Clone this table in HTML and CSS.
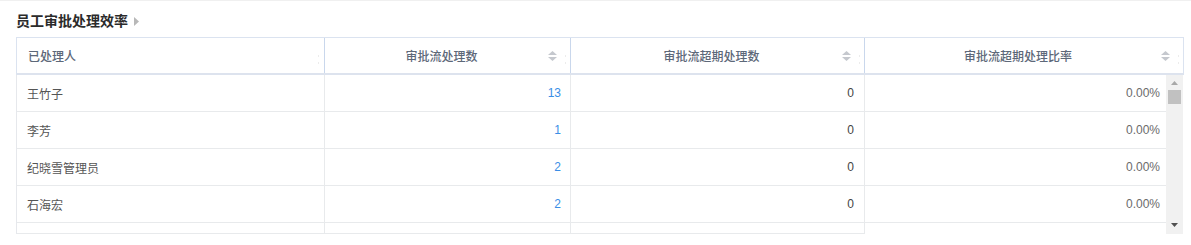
FILE: index.html
```html
<!DOCTYPE html>
<html lang="zh-CN">
<head>
<meta charset="utf-8">
<title>员工审批处理效率</title>
<link rel="stylesheet" href="styles.css">
</head>
<body>
<div class="page">
  <div class="title">
    <span class="title-text">员工审批处理效率</span>
    <svg class="title-arrow" width="5" height="9" viewBox="0 0 5 9"><polygon points="0,0 5,4.5 0,9" fill="#b8b8b8"/></svg>
  </div>
  <div class="table">
    <div class="thead">
      <div class="th th1"><span class="th-text">已处理人</span><span class="dots"></span></div>
      <div class="th"><span class="th-text">审批流处理数</span><svg class="sort" width="9" height="10" viewBox="0 0 9 10"><polygon points="0,4 4.5,0 9,4" fill="#c5c8ce"/><polygon points="0,6 4.5,10 9,6" fill="#c5c8ce"/></svg><span class="dots"></span></div>
      <div class="th"><span class="th-text">审批流超期处理数</span><svg class="sort" width="9" height="10" viewBox="0 0 9 10"><polygon points="0,4 4.5,0 9,4" fill="#c5c8ce"/><polygon points="0,6 4.5,10 9,6" fill="#c5c8ce"/></svg><span class="dots"></span></div>
      <div class="th th4"><span class="th-text">审批流超期处理比率</span><svg class="sort" width="9" height="10" viewBox="0 0 9 10"><polygon points="0,4 4.5,0 9,4" fill="#c5c8ce"/><polygon points="0,6 4.5,10 9,6" fill="#c5c8ce"/></svg><span class="dots"></span></div>
    </div>
    <div class="tbody">
      <div class="rows">
        <div class="td c1">王竹子</div><div class="td c2">13</div><div class="td c3">0</div><div class="td c4">0.00%</div>
        <div class="td c1">李芳</div><div class="td c2">1</div><div class="td c3">0</div><div class="td c4">0.00%</div>
        <div class="td c1">纪晓雪管理员</div><div class="td c2">2</div><div class="td c3">0</div><div class="td c4">0.00%</div>
        <div class="td c1">石海宏</div><div class="td c2">2</div><div class="td c3">0</div><div class="td c4">0.00%</div>
        <div class="td c1 partial"></div><div class="td c2 partial"></div><div class="td c3 partial"></div><div class="td c4 partial"></div>
      </div>
      <div class="scrollbar">
        <svg class="sb-up" width="7" height="4" viewBox="0 0 7 4"><polygon points="0,4 3.5,0 7,4" fill="#a8a8a8"/></svg>
        <div class="sb-thumb"></div>
        <div class="sb-space"></div>
        <svg class="sb-down" width="7" height="4" viewBox="0 0 7 4"><polygon points="0,0 3.5,4 7,0" fill="#505050"/></svg>
      </div>
    </div>
  </div>
</div>
</body>
</html>
```
FILE: styles.css
```css
html, body {
  margin: 0;
  padding: 0;
  background: #ffffff;
}
body {
  font-family: "Liberation Sans", "Noto Sans CJK SC", sans-serif;
  font-size: 12px;
  color: #555;
  border-top: 1px solid #f0f0f0;
}
.page {
  padding: 0 7px 0 16px;
}
.title {
  height: 36px;
  box-sizing: border-box;
  padding-top: 11px;
  display: flex;
  align-items: flex-start;
}
.title-text {
  font-size: 14px;
  line-height: 18px;
  font-weight: bold;
  color: #2b2b2b;
}
.title-arrow {
  margin-left: 6px;
  margin-top: 5px;
}
.table {
  width: 1168px;
}
.thead {
  display: grid;
  grid-template-columns: 308px 246px 294px 318px;
  border: 1px solid #dbe3f0;
  border-bottom: 2px solid #dde3ee;
  height: 38px;
  box-sizing: border-box;
}
.th {
  display: flex;
  align-items: center;
  padding-left: 10px;
  border-right: 1px solid #c9d7ec;
  color: #5d6879;
  font-weight: 500;
  font-size: 12px;
  box-sizing: border-box;
}
.th4 {
  border-right: none;
}
.th-text {
  flex: 1;
  text-align: center;
}
.th1 .th-text {
  text-align: left;
  padding-left: 1px;
}
.sort {
  flex: none;
}
.dots {
  flex: none;
  width: 1px;
  height: 5px;
  margin: 8px 4px 0 8px;
  border-top: 2px solid #ececec;
  border-bottom: 2px solid #ececec;
}
.th1 .dots {
  margin-right: 5px;
}
.tbody {
  display: flex;
  border-left: 1px solid #e6e8ec;
  height: 159px;
}
.rows {
  display: grid;
  grid-template-columns: 308px 246px 294px 301px;
  grid-auto-rows: 37px;
  align-content: start;
}
.td {
  box-sizing: border-box;
  border-bottom: 1px solid #e8eaec;
  display: flex;
  align-items: center;
  font-size: 12px;
}
.c1, .c2, .c3 {
  border-right: 1px solid #e8eaec;
}
.c1 {
  padding-left: 10px;
  color: #555;
}
.c2 {
  justify-content: flex-end;
  padding-right: 9px;
  color: #3a8ee6;
}
.c3 {
  justify-content: flex-end;
  padding-right: 10px;
  color: #444;
}
.c4 {
  justify-content: flex-end;
  padding-right: 6px;
  color: #6b6b6b;
}
.td.partial {
  height: 11px;
}
.c4.partial {
  border-bottom: none;
}
.scrollbar {
  width: 17px;
  background: #f1f1f1;
  display: flex;
  flex-direction: column;
  align-items: center;
}
.sb-up {
  margin-top: 6px;
}
.sb-thumb {
  width: 13px;
  height: 14px;
  margin-top: 5px;
  background: #c1c1c1;
}
.sb-space {
  flex: 1;
}
.sb-down {
  margin-bottom: 7px;
}
```
